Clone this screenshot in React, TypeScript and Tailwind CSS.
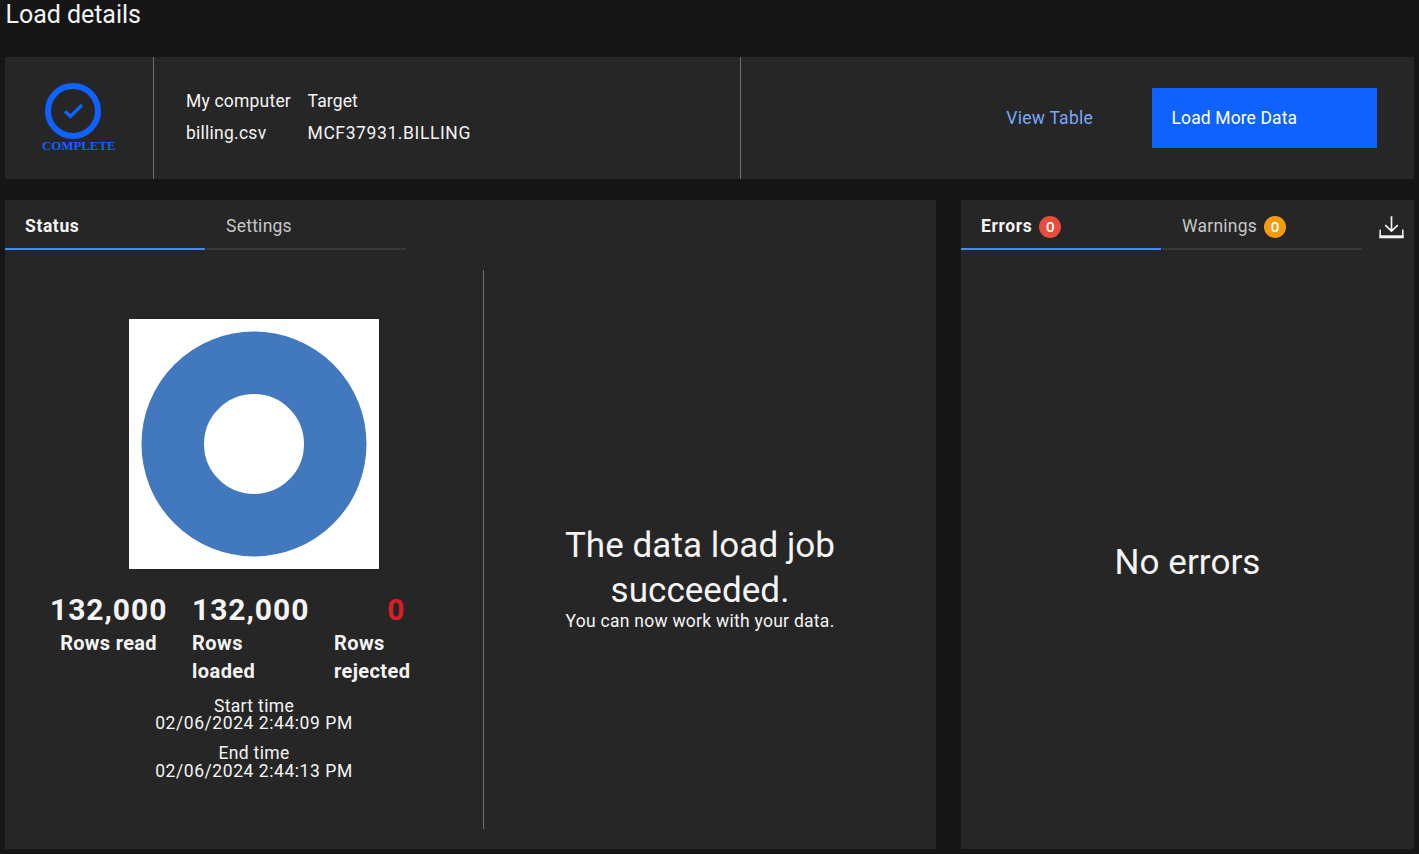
import type { ReactNode } from "react";

function Tab({ label, active, badge, badgeColor = "" }: { label: ReactNode; active?: boolean; badge?: string; badgeColor?: string }) {
  return (
    <button
      className={
        "flex h-[50px] w-[200px] items-start border-b-2 pl-5 pt-[14px] text-[17.5px] leading-6 " +
        (active ? "border-[#4589ff] font-bold tracking-[0.6px] text-[#f4f4f4]" : "border-[#393939] tracking-[0.25px] text-[#c6c6c6]")
      }
    >
      {label}
      {badge && (
        <span className={"ml-[7px] mt-[2px] flex size-[22px] items-center justify-center rounded-full pb-[2px] font-['Open_Sans',sans-serif] text-[15px] font-semibold leading-none tracking-normal text-white " + badgeColor}>
          {badge}
        </span>
      )}
    </button>
  );
}

function Header() {
  return (
    <section className="mt-[27px] flex h-[122px] bg-[#262626]">
      <div className="flex w-[149px] flex-col items-center border-r border-[#6f6f6f] pt-[26px]">
        <svg width="56" height="56" viewBox="0 0 56 56" className="mr-[12px] shrink-0" fill="none" stroke="#0f62fe">
          <circle cx="28" cy="28" r="25" strokeWidth="6" />
          <path d="M20 28.2 L25.4 33.4 L37 21.9" strokeWidth="3.5" />
        </svg>
        <span className="mr-[0.5px] font-['Liberation_Serif',serif] text-[13px] font-bold leading-[14px] tracking-[-0.1px] text-[#0f62fe]">COMPLETE</span>
      </div>
      <div className="flex w-[587px] gap-[15.5px] border-r border-[#6f6f6f] pl-8 pt-7 text-[17.5px] leading-8">
        <div className="w-[106px] whitespace-nowrap">
          <p className="tracking-[0.2px]">My computer</p>
          <p className="tracking-[0.25px]">billing.csv</p>
        </div>
        <div className="whitespace-nowrap">
          <p className="tracking-[0.15px]">Target</p>
          <p className="tracking-[0.6px]">MCF37931.BILLING</p>
        </div>
      </div>
      <div className="flex flex-1 items-center justify-end pr-[37px] text-[17.5px]">
        <button className="mr-[59px] tracking-[0.25px] text-[#78a9ff]">View Table</button>
        <button className="h-[60px] w-[225px] bg-[#0f62fe] pl-[19.5px] text-left tracking-[0.12px] text-white">Load More Data</button>
      </div>
    </section>
  );
}

export default function App() {
  return (
    <main className="flex h-[854px] w-[1419px] flex-col overflow-hidden bg-[#161616] p-[5px] pt-0 font-['Roboto',sans-serif] text-[#f4f4f4]">
      <h1 className="h-[30px] pl-[0.5px] text-[25px] leading-[30px] tracking-[-0.04px]">Load details</h1>
      <Header />
      <div className="mt-[21px] flex h-[649px] gap-[25px]">
        <section className="w-[931px] bg-[#262626]">
          <div className="flex gap-px">
            <Tab label={<span>Status</span>} active />
            <Tab label={<span>Settings</span>} />
          </div>
          <div className="mt-5 flex h-[559px]">
            <div className="w-[479px] border-r border-[#6f6f6f] pt-[49px]">
              <div className="ml-[124px] size-[250px] bg-white">
                <svg width="250" height="250" viewBox="0 0 250 250">
                  <circle cx="125" cy="125" r="81.25" fill="none" stroke="#4178be" strokeWidth="62.5" />
                </svg>
              </div>
              <div className="ml-[45px] mt-[22px] grid grid-cols-[142px_142px_100px] font-bold">
                <div className="w-[117px] text-center">
                  <p className="text-[30px] leading-[38px] tracking-[0.95px]">132,000</p>
                  <p className="text-[20px] leading-7 tracking-[0.3px]">Rows read</p>
                </div>
                <div>
                  <p className="text-[30px] leading-[38px] tracking-[0.95px]">132,000</p>
                  <p className="text-[20px] leading-7 tracking-[0.45px]">Rows<br />loaded</p>
                </div>
                <div className="w-[77px]">
                  <p className="pr-[6.5px] text-right text-[30px] leading-[38px] text-[#da1e28]">0</p>
                  <p className="text-[20px] leading-7 tracking-[0.4px]">Rows<br />rejected</p>
                </div>
              </div>
              <div className="ml-[124px] mt-[13px] w-[250px] text-center text-[17.5px]">
                <p className="leading-[17px] tracking-[0.35px]">Start time</p>
                <p className="leading-[17px] tracking-[0.56px]">02/06/2024 2:44:09 PM</p>
                <p className="mt-[12px] leading-[18px] tracking-[0.35px]">End time</p>
                <p className="leading-[18px] tracking-[0.56px]">02/06/2024 2:44:13 PM</p>
              </div>
            </div>
            <div className="flex w-[432px] flex-col items-center pt-[253px] text-center">
              <h2 className="text-[35px] leading-[45px] tracking-[0.05px]">The data load job<br />succeeded.</h2>
              <p className="-mt-px text-[17.5px] leading-[18px] tracking-[0.27px]">You can now work with your data.</p>
            </div>
          </div>
        </section>
        <section className="w-[453px] bg-[#262626]">
          <div className="flex gap-px">
            <Tab label={<span>Errors</span>} active badge="0" badgeColor="bg-[#e74c3c]" />
            <Tab label={<span>Warnings</span>} badge="0" badgeColor="bg-[#f39c12]" />
            <button aria-label="Download" className="ml-[15px] mt-[14px] h-[26px]">
              <svg width="27" height="26" viewBox="1 0 27 26" fill="none" stroke="#f4f4f4">
                <path d="M14.5 2.2V17M8.2 11.2 14.5 17.2l6.3-6" strokeWidth="1.7" />
                <path d="M3.2 15.5V23.2H25.8V15.5" strokeWidth="1.5" />
                <path d="M2.5 22.8H26.5" strokeWidth="3" />
              </svg>
            </button>
          </div>
          <p className="mt-[290px] text-center text-[35px] leading-[45px] tracking-[0.05px]">No errors</p>
        </section>
      </div>
    </main>
  );
}
